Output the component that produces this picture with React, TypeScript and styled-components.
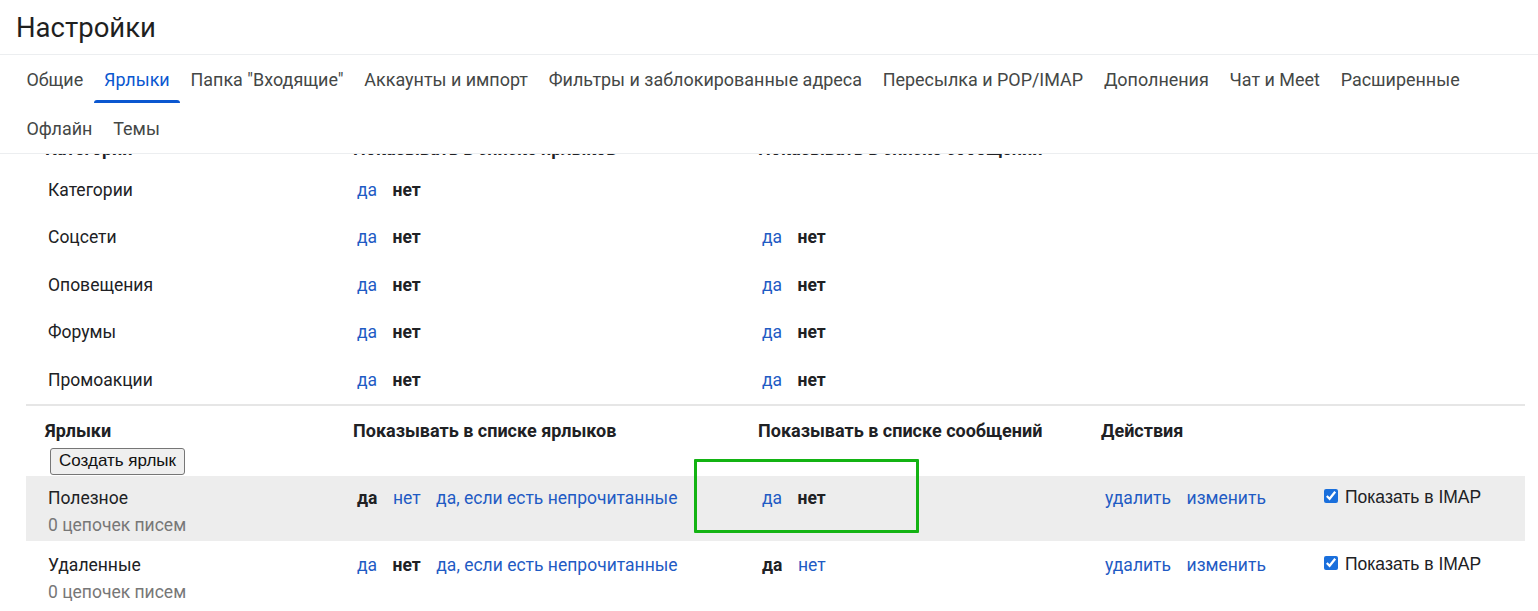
import React from "react";
import styled, { createGlobalStyle, css } from "styled-components";

const GlobalStyle = createGlobalStyle`
  html, body { margin: 0; padding: 0; background: #fff; }
  body { font-family: Roboto, "Liberation Sans", Arial, sans-serif; color: #1f1f1f; }
  * { box-sizing: border-box; }
`;

const Page = styled.div`
  position: relative;
  height: 611px;
  display: flex;
  flex-direction: column;
  overflow: hidden;
  background: #fff;
`;

const Header = styled.header`
  flex: none;
  border-bottom: 1px solid #eceef0;
`;

const Title = styled.h1`
  margin: 0;
  height: 55px;
  padding: 0 16px;
  display: flex;
  align-items: center;
  font-size: 27.5px;
  font-weight: 400;
  color: #1f1f1f;
  border-bottom: 1px solid #eceef0;
`;

const Tabs = styled.nav`
  display: flex;
  flex-wrap: wrap;
  padding: 0 16px;
`;

const Tab = styled.div<{ $active?: boolean }>`
  position: relative;
  height: 49px;
  padding: 0 10.4px;
  display: flex;
  align-items: center;
  font-size: 17.95px;
  color: #444746;
  white-space: nowrap;
  ${(p) =>
    p.$active &&
    css`
      color: #0b57d0;
      &::after {
        content: "";
        position: absolute;
        left: 0;
        right: 0;
        bottom: 1px;
        height: 3px;
        background: #0b57d0;
        border-radius: 3px 3px 0 0;
      }
    `}
`;

const Viewport = styled.div`
  flex: 1;
  overflow: hidden;
`;

const Table = styled.div`
  margin: -24px 13px 0 26px;
  font-size: 17.5px;
`;

const cols = "308px 405px 343px 223px 1fr";

const HeadRow = styled.div<{ $h?: number }>`
  display: grid;
  grid-template-columns: ${cols};
  align-items: center;
  height: ${(p) => p.$h ?? 36}px;
`;

const HeadCell = styled.div`
  padding-left: 19px;
  font-weight: 700;
  font-size: 18px;
  color: #202124;
  white-space: nowrap;
`;

const CatRow = styled.div`
  display: grid;
  grid-template-columns: ${cols};
  align-items: center;
  height: 47.5px;
`;

const Cell = styled.div<{ $pad?: number }>`
  padding-left: ${(p) => p.$pad ?? 23}px;
  display: flex;
  align-items: center;
  gap: 15.5px;
  white-space: nowrap;
  color: #202124;
`;

const Opt = styled.span<{ $active?: boolean }>`
  color: ${(p) => (p.$active ? "#202124" : "#1f5bc4")};
  font-weight: ${(p) => (p.$active ? 700 : 400)};
  cursor: pointer;
`;

const Divider = styled.div`
  height: 2px;
  background: #e6e6e6;
`;

const LabelsHead = styled.div`
  padding-top: 14px;
`;

const ButtonRow = styled.div`
  padding: 8px 0 1px 24px;
`;

const Button = styled.button`
  height: 27px;
  padding: 0 8px;
  font-family: "Liberation Sans", Arial, sans-serif;
  font-size: 17px;
  color: #111;
  background: #efefef;
  border: 1px solid #767676;
  border-radius: 3px;
`;

const LabelRow = styled.div<{ $shaded?: boolean }>`
  display: grid;
  grid-template-columns: ${cols};
  align-items: start;
  padding: ${(p) => (p.$shaded ? "12px 0 6px" : "14px 0 6px")};
  background: ${(p) => (p.$shaded ? "#ededed" : "transparent")};
`;

const NameCell = styled.div`
  padding-left: 22px;
  display: flex;
  flex-direction: column;
  gap: 7px;
`;

const Name = styled.div`
  line-height: 20px;
  color: #202124;
`;

const Sub = styled.div`
  line-height: 20px;
  color: #777;
`;

const LineCell = styled(Cell)`
  height: 20px;
`;

const Imap = styled.label`
  display: flex;
  align-items: center;
  gap: 7px;
  padding-left: 19px;
  height: 20px;
  font-family: "Liberation Sans", Arial, sans-serif;
  font-size: 17.5px;
  color: #202124;
  white-space: nowrap;
  input {
    margin: 0 0 3px;
    width: 14px;
    height: 14px;
    accent-color: #1a6fdc;
  }
`;

const Highlight = styled.div`
  position: absolute;
  left: 694px;
  top: 459px;
  width: 225px;
  height: 74px;
  border: 3.5px solid #13b313;
  border-radius: 1px;
  pointer-events: none;
`;

const tabs = [
  "Общие",
  "Ярлыки",
  'Папка "Входящие"',
  "Аккаунты и импорт",
  "Фильтры и заблокированные адреса",
  "Пересылка и POP/IMAP",
  "Дополнения",
  "Чат и Meet",
  "Расширенные",
  "Офлайн",
  "Темы",
];

const categories: { name: string; list: string; msgs: string | null }[] = [
  { name: "Категории", list: "нет", msgs: null },
  { name: "Соцсети", list: "нет", msgs: "нет" },
  { name: "Оповещения", list: "нет", msgs: "нет" },
  { name: "Форумы", list: "нет", msgs: "нет" },
  { name: "Промоакции", list: "нет", msgs: "нет" },
];

const labels = [
  { name: "Полезное", list: "да", msgs: "нет", shaded: true },
  { name: "Удаленные", list: "нет", msgs: "да", shaded: false },
];

const YesNo = ({ active }: { active: string }) => (
  <>
    <Opt $active={active === "да"}>да</Opt>
    <Opt $active={active === "нет"}>нет</Opt>
  </>
);

export default function App() {
  return (
    <Page>
      <GlobalStyle />
      <Header>
        <Title>Настройки</Title>
        <Tabs>
          {tabs.map((t) => (
            <Tab key={t} $active={t === "Ярлыки"}>
              {t}
            </Tab>
          ))}
        </Tabs>
      </Header>
      <Viewport>
        <Table>
          <HeadRow>
            <HeadCell>Категории</HeadCell>
            <HeadCell>Показывать в списке ярлыков</HeadCell>
            <HeadCell>Показывать в списке сообщений</HeadCell>
          </HeadRow>
          {categories.map((c) => (
            <CatRow key={c.name}>
              <Cell $pad={22}>{c.name}</Cell>
              <Cell>
                <YesNo active={c.list} />
              </Cell>
              <Cell>{c.msgs && <YesNo active={c.msgs} />}</Cell>
            </CatRow>
          ))}
          <Divider />
          <LabelsHead>
            <HeadRow $h={20}>
              <HeadCell>Ярлыки</HeadCell>
              <HeadCell>Показывать в списке ярлыков</HeadCell>
              <HeadCell>Показывать в списке сообщений</HeadCell>
              <HeadCell>Действия</HeadCell>
            </HeadRow>
            <ButtonRow>
              <Button type="button">Создать ярлык</Button>
            </ButtonRow>
          </LabelsHead>
          {labels.map((l) => (
            <LabelRow key={l.name} $shaded={l.shaded}>
              <NameCell>
                <Name>{l.name}</Name>
                <Sub>0 цепочек писем</Sub>
              </NameCell>
              <LineCell>
                <YesNo active={l.list} />
                <Opt>да, если есть непрочитанные</Opt>
              </LineCell>
              <LineCell>
                <YesNo active={l.msgs} />
              </LineCell>
              <LineCell>
                <Opt>удалить</Opt>
                <Opt>изменить</Opt>
              </LineCell>
              <Imap>
                <input type="checkbox" defaultChecked />
                Показать в IMAP
              </Imap>
            </LabelRow>
          ))}
        </Table>
      </Viewport>
      <Highlight />
    </Page>
  );
}
